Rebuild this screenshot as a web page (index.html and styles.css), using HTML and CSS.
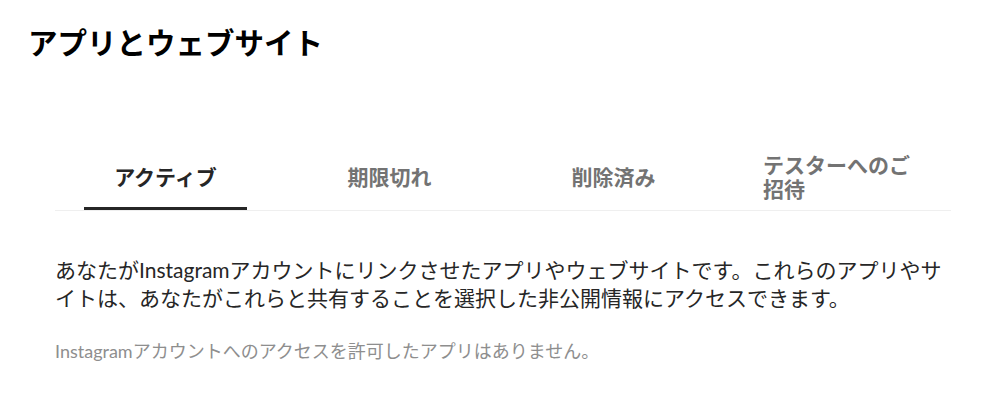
FILE: index.html
```html
<!DOCTYPE html>
<html lang="ja">
<head>
    <meta charset="UTF-8">
    <meta name="viewport" content="width=device-width, initial-scale=1.0">
    <title>アプリとウェブサイト</title>
    <link rel="stylesheet" href="styles.css">
</head>
<body>
    <div class="page">
        <h1 class="page-title">アプリとウェブサイト</h1>

        <div class="content">
            <!-- タブ -->
            <div class="tabs">
                <div class="tab active"><span class="tab-label">アクティブ</span></div>
                <div class="tab"><span class="tab-label">期限切れ</span></div>
                <div class="tab"><span class="tab-label">削除済み</span></div>
                <div class="tab"><span class="tab-label">テスターへのご招待</span></div>
            </div>

            <p class="description">あなたがInstagramアカウントにリンクさせたアプリやウェブサイトです。これらのアプリやサイトは、あなたがこれらと共有することを選択した非公開情報にアクセスできます。</p>

            <p class="empty">Instagramアカウントへのアクセスを許可したアプリはありません。</p>
        </div>
    </div>
</body>
</html>
```

FILE: styles.css
```css
* {
    box-sizing: border-box;
    margin: 0;
    padding: 0;
}

body {
    font-family: 'Lato', 'Noto Sans CJK JP', sans-serif;
    background: #fff;
    color: #262626;
}

.page {
    padding: 21px 0 0 28px;
}

.page-title {
    font-family: 'Noto Sans CJK JP', sans-serif;
    font-size: 29.5px;
    font-weight: 700;
    line-height: 40px;
    color: #000;
}

/* タブとテキスト */
.content {
    width: 896px;
    margin: 84px 0 0 27px;
}

.tabs {
    display: flex;
    border-bottom: 1px solid #efefef;
}

.tab {
    flex: 1;
    display: flex;
    justify-content: center;
    align-items: center;
    height: 65px;
    margin: 0 32px 0 29px;
    border-bottom: 3px solid transparent;
    font-family: 'Noto Sans CJK JP', sans-serif;
    font-size: 21px;
    font-weight: 700;
    line-height: 24px;
    color: #737373;
}

.tab-label {
    max-width: 7.1em;
}

.tab.active {
    color: #262626;
    border-bottom-color: #262626;
}

.description {
    margin-top: 45px;
    font-size: 21px;
    line-height: 28px;
}

.empty {
    margin-top: 27px;
    font-size: 18px;
    line-height: 24px;
    color: #8e8e8e;
}
```
